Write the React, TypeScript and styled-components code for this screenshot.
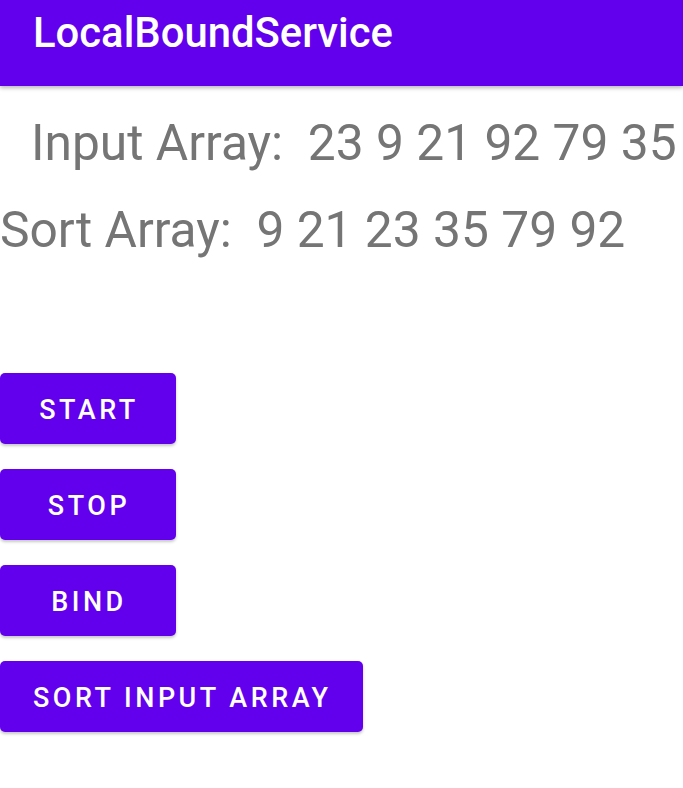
import React from 'react';
import styled, {createGlobalStyle} from "styled-components";

const GlobalStyle = createGlobalStyle`
  html, body {
    margin: 0;
    padding: 0;
    background: #ffffff;
    font-family: Roboto, "Noto Sans", "Liberation Sans", sans-serif;
  }
`

const Page = styled.div`
  width: 683px;
  min-height: 788px;
  background: #ffffff;
  display: flex;
  flex-direction: column;
`

const AppBar = styled.header`
  height: 86px;
  background-color: #6200ee;
  box-shadow: 0 2px 4px rgba(0, 0, 0, 0.28);
  padding: 9px 0 0 33px;
  box-sizing: border-box;

  > h1 {
    margin: 0;
    color: #ffffff;
    font-size: 41.8px;
    font-weight: 500;
    line-height: 48px;
  }
`

const Line = styled.div<{ $indent: number, $top: number }>`
  margin: ${p => p.$top}px 0 0 ${p => p.$indent}px;
  color: #757575;
  font-size: 49.7px;
  line-height: 58px;
  white-space: pre;
`

const Buttons = styled.div`
  display: flex;
  flex-direction: column;
  align-items: flex-start;
  gap: 25px;
  margin-top: 114px;
`

const Button = styled.button`
  height: 71px;
  min-width: 176px;
  padding: 3px 31px 0 33px;
  box-sizing: border-box;
  border: none;
  border-radius: 5px;
  background-color: #6200ee;
  color: #ffffff;
  font-family: Roboto, "Noto Sans", "Liberation Sans", sans-serif;
  font-size: 27px;
  font-weight: 500;
  letter-spacing: 3.5px;
  text-transform: uppercase;
  box-shadow: 0 2px 3px rgba(0, 0, 0, 0.22);
  cursor: pointer;
`

const App: React.FC = () => {
    const input = [23, 9, 21, 92, 79, 35]
    const sorted = [...input].sort((a, b) => a - b)

    return (
        <Page>
            <GlobalStyle/>
            <AppBar><h1>LocalBoundService</h1></AppBar>
            <Line $indent={31} $top={28}>{`Input Array:  ${input.join(' ')}`}</Line>
            <Line $indent={0} $top={29}>{`Sort Array:  ${sorted.join(' ')}`}</Line>
            <Buttons>
                <Button>Start</Button>
                <Button>Stop</Button>
                <Button>Bind</Button>
                <Button>Sort Input Array</Button>
            </Buttons>
        </Page>
    )
}
export default App;
